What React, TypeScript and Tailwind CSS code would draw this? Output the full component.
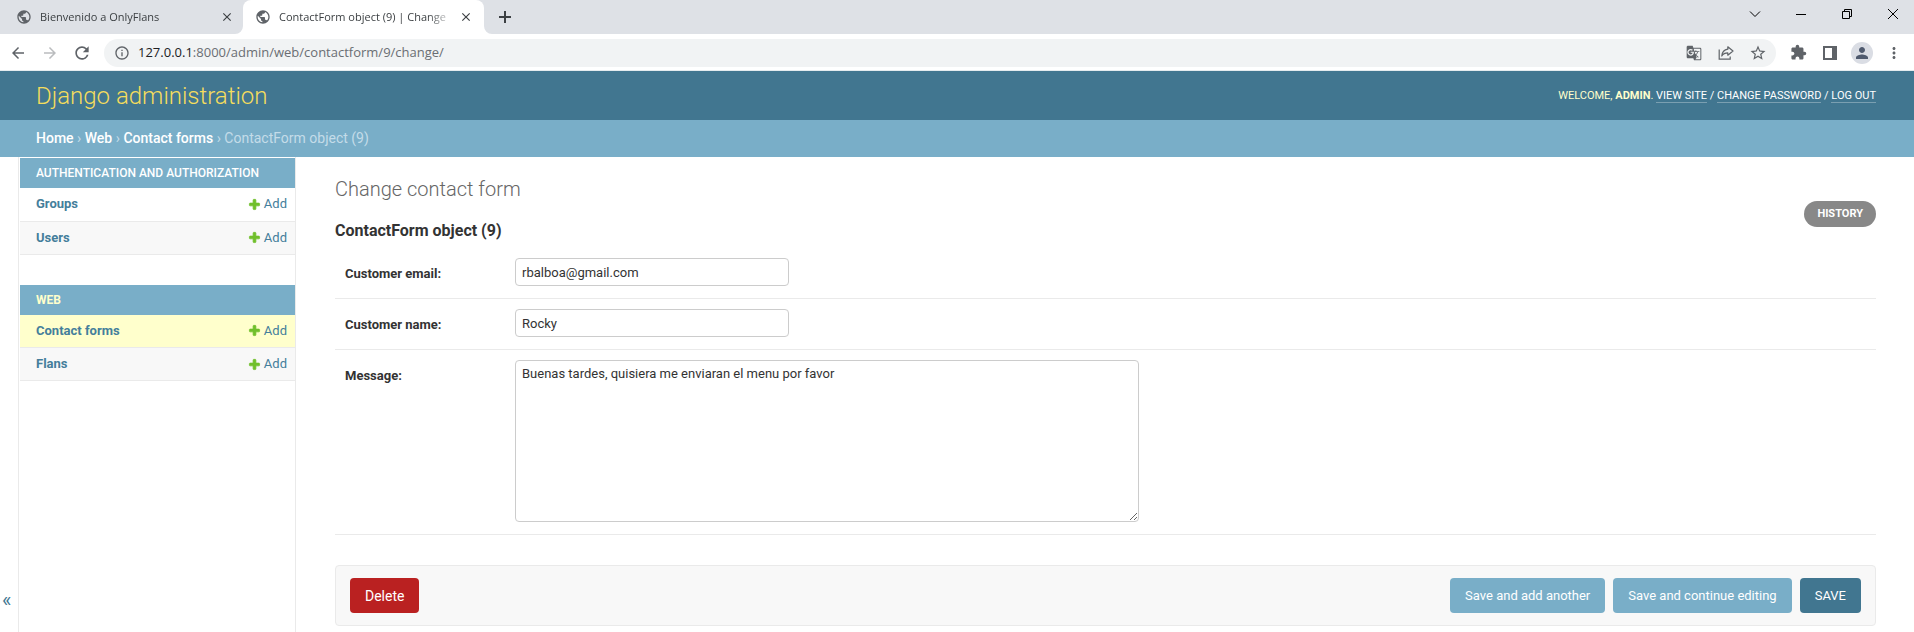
import type { ReactNode } from "react";
import {
  MdArrowBack,
  MdArrowForward,
  MdClose,
  MdExtension,
  MdGTranslate,
  MdInfoOutline,
  MdMoreVert,
  MdPerson,
  MdPublic,
  MdRefresh,
  MdStarBorder,
} from "react-icons/md";

function TabCurve({ side }: { side: "left" | "right" }) {
  return (
    <svg width="8" height="8" viewBox="0 0 8 8" className="shrink-0 self-end" aria-hidden="true">
      <path d={side === "left" ? "M8 0V8H0A8 8 0 0 0 8 0Z" : "M0 0V8H8A8 8 0 0 1 0 0Z"} fill="#fff" />
    </svg>
  );
}

function TabContent({ title }: { title: string }) {
  return (
    <>
      <MdPublic className="size-4 shrink-0 text-[#5f6368]" />
      <span className="ml-2 min-w-0 flex-1 whitespace-nowrap text-[#3c4043] [mask-image:linear-gradient(to_right,black_85%,transparent)]">
        {title}
      </span>
      <button type="button" aria-label="Close tab" className="ml-1 flex size-4 shrink-0 items-center justify-center text-[#3c4043]">
        <MdClose className="size-3.5" />
      </button>
    </>
  );
}

function TabStrip() {
  return (
    <div className="flex h-[34px] items-stretch bg-[#dee1e6] text-[11px]">
      <div className="flex w-[235px] items-center pl-4">
        <TabContent title="Bienvenido a OnlyFlans" />
      </div>
      <TabCurve side="left" />
      <div className="flex w-[241px] items-center rounded-t-lg bg-white pr-2.5 pl-3">
        <TabContent title="ContactForm object (9) | Change" />
      </div>
      <TabCurve side="right" />
      <button type="button" aria-label="New tab" className="ml-[5px] flex w-4 items-center justify-center text-[#3c4043]">
        <svg width="12" height="12" viewBox="0 0 12 12" stroke="currentColor" strokeWidth="2" aria-hidden="true">
          <path d="M6 0V12M0 6H12" />
        </svg>
      </button>
      <div className="ml-auto flex text-black">
        <WindowButton label="Search tabs">
          <path d="M1 3.5L6 8.5L11 3.5" />
        </WindowButton>
        <WindowButton label="Minimize">
          <path d="M1 6.5H11" />
        </WindowButton>
        <WindowButton label="Restore">
          <path d="M1.5 3.5H8.5V10.5H1.5ZM3.5 3.5V1.5H10.5V8.5H8.5" />
        </WindowButton>
        <WindowButton label="Close window">
          <path d="M1 1L11 11M11 1L1 11" />
        </WindowButton>
      </div>
    </div>
  );
}

function WindowButton({ label, children }: { label: string; children: ReactNode }) {
  return (
    <button type="button" aria-label={label} className="flex w-[46px] items-center justify-center pb-1.5 pl-1">
      <svg width="12" height="12" viewBox="0 0 12 12" fill="none" stroke="currentColor" strokeWidth="1" aria-hidden="true">
        {children}
      </svg>
    </button>
  );
}

function IconButton({ label, children }: { label: string; children: ReactNode }) {
  return (
    <button type="button" aria-label={label} className="flex h-7 w-8 shrink-0 items-center justify-center">
      {children}
    </button>
  );
}

function Toolbar() {
  return (
    <div className="flex h-9 items-center bg-white pt-px pr-1 pl-0.5 text-[#5f6368]">
      <IconButton label="Back">
        <MdArrowBack className="size-[18px]" />
      </IconButton>
      <IconButton label="Forward">
        <MdArrowForward className="size-[18px] text-[#babcbe]" />
      </IconButton>
      <IconButton label="Reload">
        <MdRefresh className="size-5" />
      </IconButton>
      <div className="ml-1.5 flex h-7 flex-1 items-center rounded-full bg-[#f1f3f4] pr-0.5 pl-2.5">
        <MdInfoOutline className="size-4 shrink-0" />
        <span className="ml-2 flex-1 text-[13px] text-[#6a6e73]">
          <span className="text-[#202124]">127.0.0.1</span>:8000/admin/web/contactform/9/change/
        </span>
        <IconButton label="Translate this page">
          <MdGTranslate className="size-4" />
        </IconButton>
        <IconButton label="Share this page">
          <svg width="16" height="16" viewBox="0 0 16 16" fill="none" stroke="currentColor" strokeWidth="1.2" aria-hidden="true">
            <path d="M1.2 4.5V14.2H12.2V11.5" />
            <path d="M9.8 1.8L15 6L9.8 10.2V7.9C6.8 7.9 5 9 3.8 11C4.1 7.5 6 4.7 9.8 4.2Z" strokeLinejoin="round" />
          </svg>
        </IconButton>
        <IconButton label="Bookmark this tab">
          <MdStarBorder className="size-[18px]" />
        </IconButton>
      </div>
      <div className="flex items-center pl-1.5">
        <IconButton label="Extensions">
          <MdExtension className="size-[17px]" />
        </IconButton>
        <IconButton label="Side panel">
          <svg width="14" height="14" viewBox="0 0 14 14" aria-hidden="true">
            <path d="M0 0H14V14H0ZM2 2V12H9V2Z" fill="currentColor" fillRule="evenodd" />
          </svg>
        </IconButton>
        <IconButton label="Profile">
          <span className="flex size-[22px] items-center justify-center rounded-full bg-[#dadde4]">
            <MdPerson className="size-[18px] text-[#4f5a6e]" />
          </span>
        </IconButton>
        <IconButton label="Menu">
          <MdMoreVert className="size-[18px]" />
        </IconButton>
      </div>
    </div>
  );
}

const TOOL_LINK = "border-b border-white/30 text-white";

function Header() {
  return (
    <header className="flex h-[49px] items-center justify-between bg-[#417690] pr-[38px] pl-9">
      <h1 className="text-2xl font-light text-[#f5dd5d]">
        <a href="#home">Django administration</a>
      </h1>
      <div className="text-[11px] leading-[13px] text-[#ffc] uppercase">
        Welcome, <strong className="font-bold">admin</strong>.{" "}
        <a href="#site" className={TOOL_LINK}>View site</a>
        <span className="text-white"> / </span>
        <a href="#password" className={TOOL_LINK}>Change password</a>
        <span className="text-white"> / </span>
        <a href="#logout" className={TOOL_LINK}>Log out</a>
      </div>
    </header>
  );
}

function Breadcrumbs() {
  return (
    <nav aria-label="Breadcrumbs" className="bg-[#79aec8] py-2 pl-9 text-sm leading-[21px] text-[#c4dce8]">
      <a href="#home" className="font-medium text-white">Home</a>
      {" › "}
      <a href="#web" className="font-medium text-white">Web</a>
      {" › "}
      <a href="#contactforms" className="font-medium text-white">Contact forms</a>
      {" › ContactForm object (9)"}
    </nav>
  );
}

interface Model {
  name: string;
  current?: boolean;
}

function AppModule({ title, current, models }: { title: string; current?: boolean; models: Model[] }) {
  return (
    <table className="mb-[30px] w-full border-collapse text-[13px] leading-4">
      <caption className="h-[30px] bg-[#79aec8] px-4 py-[7px] text-left text-xs font-medium uppercase">
        <a href={`#${title}`} className={current ? "font-bold text-[#ffc]" : "text-white"}>{title}</a>
      </caption>
      <tbody>
        {models.map((model) => (
          <tr
            key={model.name}
            className={
              model.current
                ? "h-[33px] border-b border-[#eaeaea] bg-[#ffc]"
                : "h-[33px] border-b border-[#eaeaea] even:bg-[#f8f8f8]"
            }
          >
            <th scope="row" className="px-4 text-left font-bold text-[#447e9b]">
              <a href={`#${model.name}`}>{model.name}</a>
            </th>
            <td className="pr-2 text-[#447e9b]">
              <a href={`#add-${model.name}`} className="flex items-center justify-end gap-[3px]">
                <svg width="13" height="13" viewBox="0 0 1792 1792" fill="#70bf2b" aria-hidden="true">
                  <path d="M1600 796v192q0 40-28 68t-68 28h-416v416q0 40-28 68t-68 28h-192q-40 0-68-28t-28-68v-416h-416q-40 0-68-28t-28-68v-192q0-40 28-68t68-28h416v-416q0-40 28-68t68-28h192q40 0 68 28t28 68v416h416q40 0 68 28t28 68z" stroke="#70bf2b" strokeWidth="100" />
                </svg>
                Add
              </a>
            </td>
          </tr>
        ))}
      </tbody>
    </table>
  );
}

function Sidebar() {
  return (
    <div className="flex w-[296px] shrink-0 border-r border-[#eaeaea]">
      <button
        type="button"
        aria-label="Toggle navigation"
        className="flex w-[19px] shrink-0 items-end border-r border-[#eaeaea] pb-[18px] pl-0.5 text-xl leading-7 text-[#417690]"
      >
        «
      </button>
      <nav aria-label="Sidebar" className="flex-1 pt-px pl-px">
        <AppModule title="Authentication and Authorization" models={[{ name: "Groups" }, { name: "Users" }]} />
        <AppModule title="Web" current models={[{ name: "Contact forms", current: true }, { name: "Flans" }]} />
      </nav>
    </div>
  );
}

function FormRow({ id, label, children }: { id: string; label: string; children: ReactNode }) {
  return (
    <div className="flex items-start border-b border-[#eaeaea] px-2.5 pt-2.5 pb-3">
      <label htmlFor={id} className="w-[170px] shrink-0 pt-2 leading-4 font-bold">
        {label}:
      </label>
      {children}
    </div>
  );
}

const FIELD = "rounded border border-[#ccc] px-1.5 text-[#333] outline-none";
const SUBMIT = "h-[35px] rounded bg-[#79aec8] px-[15px] text-white";

function ChangeForm() {
  return (
    <main className="min-w-0 flex-1 pt-5 pr-[38px] pl-[39px] text-[13px] text-[#333]">
      <h1 className="text-xl leading-6 font-light text-[#666]">Change contact form</h1>
      <div className="flex h-[47px] items-start justify-between">
        <h2 className="pt-5 text-base leading-5 font-bold">ContactForm object (9)</h2>
        <a href="#history" className="flex h-[26px] items-center rounded-full bg-[#888] px-[13px] text-[11px] font-bold text-white uppercase">
          History
        </a>
      </div>
      <form onSubmit={(event) => event.preventDefault()}>
        <FormRow id="email" label="Customer email">
          <input id="email" type="email" defaultValue="rbalboa@gmail.com" className={`${FIELD} h-7 w-[274px]`} />
        </FormRow>
        <FormRow id="name" label="Customer name">
          <input id="name" type="text" defaultValue="Rocky" className={`${FIELD} h-7 w-[274px]`} />
        </FormRow>
        <FormRow id="message" label="Message">
          <textarea
            id="message"
            defaultValue="Buenas tardes, quisiera me enviaran el menu por favor"
            className={`${FIELD} h-[162px] w-[624px] resize py-[5px] leading-4`}
          />
        </FormRow>
        <div className="mt-[30px] flex items-center gap-2 rounded border border-[#eaeaea] bg-[#f8f8f8] px-3.5 py-3">
          <a href="#delete" className="mr-auto flex h-[35px] items-center rounded bg-[#ba2121] px-[15px] text-sm text-white">
            Delete
          </a>
          <button type="submit" className={SUBMIT}>Save and add another</button>
          <button type="submit" className={SUBMIT}>Save and continue editing</button>
          <button type="submit" className="h-[35px] rounded bg-[#417690] px-[15px] text-white uppercase">
            Save
          </button>
        </div>
      </form>
    </main>
  );
}

export default function App() {
  return (
    <div className="flex min-h-screen flex-col bg-white font-['Roboto',sans-serif]">
      <div className="border-b border-[#e4ebee] font-['Open_Sans',sans-serif]">
        <TabStrip />
        <Toolbar />
      </div>
      <Header />
      <Breadcrumbs />
      <div className="flex flex-1">
        <Sidebar />
        <ChangeForm />
      </div>
    </div>
  );
}
